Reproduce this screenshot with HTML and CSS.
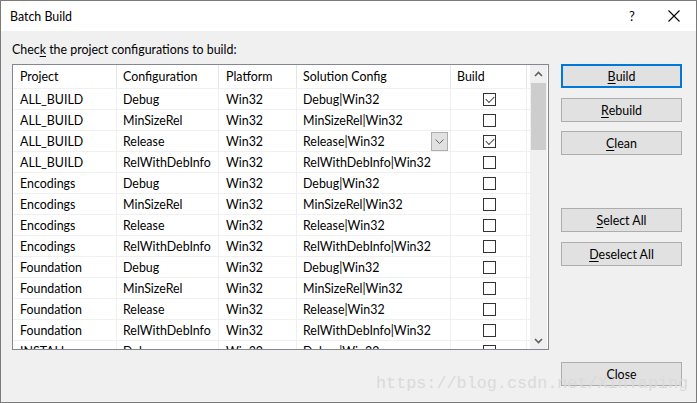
FILE: index.html
```html
<!DOCTYPE html>
<html>
<head>
<meta charset="utf-8">
<link rel="stylesheet" href="styles.css">
</head>
<body>
<div class="window">
  <div class="titlebar">
    <span class="title">Batch Build</span>
    <span class="help">?</span>
    <span class="close">
      <svg width="12" height="12" viewBox="0 0 12 12"><path d="M0.5 0.5 L11.5 11.5 M11.5 0.5 L0.5 11.5" stroke="#000" stroke-width="1.1" fill="none"/></svg>
    </span>
  </div>
  <div class="content">
    <div class="left">
      <div class="label">Chec<u>k</u> the project configurations to build:</div>
      <div class="grid">
        <div class="table">
          <div class="row head">
            <div class="c c1">Project</div>
            <div class="c c2">Configuration</div>
            <div class="c c3">Platform</div>
            <div class="c c4">Solution Config</div>
            <div class="c c5">Build</div>
            <div class="c fill"></div>
          </div>
          <div class="row"><div class="c c1">ALL_BUILD</div><div class="c c2">Debug</div><div class="c c3">Win32</div><div class="c c4">Debug|Win32</div><div class="c c5"><span class="cb on"></span></div><div class="c fill"></div></div>
          <div class="row"><div class="c c1">ALL_BUILD</div><div class="c c2">MinSizeRel</div><div class="c c3">Win32</div><div class="c c4">MinSizeRel|Win32</div><div class="c c5"><span class="cb"></span></div><div class="c fill"></div></div>
          <div class="row"><div class="c c1">ALL_BUILD</div><div class="c c2">Release</div><div class="c c3">Win32</div><div class="c c4 combo">Release|Win32<span class="drop"><svg width="9" height="5" viewBox="0 0 9 5"><path d="M0.5 0.5 L4.5 4.5 L8.5 0.5" stroke="#606060" stroke-width="1" fill="none"/></svg></span></div><div class="c c5"><span class="cb on"></span></div><div class="c fill"></div></div>
          <div class="row"><div class="c c1">ALL_BUILD</div><div class="c c2">RelWithDebInfo</div><div class="c c3">Win32</div><div class="c c4">RelWithDebInfo|Win32</div><div class="c c5"><span class="cb"></span></div><div class="c fill"></div></div>
          <div class="row"><div class="c c1">Encodings</div><div class="c c2">Debug</div><div class="c c3">Win32</div><div class="c c4">Debug|Win32</div><div class="c c5"><span class="cb"></span></div><div class="c fill"></div></div>
          <div class="row"><div class="c c1">Encodings</div><div class="c c2">MinSizeRel</div><div class="c c3">Win32</div><div class="c c4">MinSizeRel|Win32</div><div class="c c5"><span class="cb"></span></div><div class="c fill"></div></div>
          <div class="row"><div class="c c1">Encodings</div><div class="c c2">Release</div><div class="c c3">Win32</div><div class="c c4">Release|Win32</div><div class="c c5"><span class="cb"></span></div><div class="c fill"></div></div>
          <div class="row"><div class="c c1">Encodings</div><div class="c c2">RelWithDebInfo</div><div class="c c3">Win32</div><div class="c c4">RelWithDebInfo|Win32</div><div class="c c5"><span class="cb"></span></div><div class="c fill"></div></div>
          <div class="row"><div class="c c1">Foundation</div><div class="c c2">Debug</div><div class="c c3">Win32</div><div class="c c4">Debug|Win32</div><div class="c c5"><span class="cb"></span></div><div class="c fill"></div></div>
          <div class="row"><div class="c c1">Foundation</div><div class="c c2">MinSizeRel</div><div class="c c3">Win32</div><div class="c c4">MinSizeRel|Win32</div><div class="c c5"><span class="cb"></span></div><div class="c fill"></div></div>
          <div class="row"><div class="c c1">Foundation</div><div class="c c2">Release</div><div class="c c3">Win32</div><div class="c c4">Release|Win32</div><div class="c c5"><span class="cb"></span></div><div class="c fill"></div></div>
          <div class="row"><div class="c c1">Foundation</div><div class="c c2">RelWithDebInfo</div><div class="c c3">Win32</div><div class="c c4">RelWithDebInfo|Win32</div><div class="c c5"><span class="cb"></span></div><div class="c fill"></div></div>
          <div class="row"><div class="c c1">INSTALL</div><div class="c c2">Debug</div><div class="c c3">Win32</div><div class="c c4">Debug|Win32</div><div class="c c5"><span class="cb"></span></div><div class="c fill"></div></div>
        </div>
        <div class="scrollbar">
          <div class="arrow"><svg width="9" height="6" viewBox="0 0 9 6"><path d="M1 5 L4.5 1.5 L8 5" stroke="#606060" stroke-width="1.6" fill="none"/></svg></div>
          <div class="track"><div class="thumb"></div></div>
          <div class="arrow"><svg width="9" height="6" viewBox="0 0 9 6"><path d="M1 1 L4.5 4.5 L8 1" stroke="#606060" stroke-width="1.6" fill="none"/></svg></div>
        </div>
      </div>
    </div>
    <div class="buttons">
      <div class="btn default"><u>B</u>uild</div>
      <div class="btn"><u>R</u>ebuild</div>
      <div class="btn"><u>C</u>lean</div>
      <div class="btn gap1"><u>S</u>elect All</div>
      <div class="btn"><u>D</u>eselect All</div>
      <div class="btn last">Close</div>
    </div>
  </div>
  <div class="watermark">https://blog.csdn.net/XinYaping</div>
</div>
</body>
</html>
```

FILE: styles.css
```css
* { box-sizing: border-box; }
html, body { margin: 0; padding: 0; }
body {
  width: 697px;
  height: 403px;
  overflow: hidden;
  font-family: "Lato", "Noto Sans", sans-serif;
  font-size: 12.4px;
  color: #000;
}
.window {
  position: relative;
  width: 697px;
  height: 403px;
  border: 1px solid #7a7a7a;
  background: #f0f0f0;
  display: flex;
  flex-direction: column;
}
.titlebar {
  height: 30px;
  background: #fff;
  display: flex;
  align-items: center;
  padding-left: 9px;
}
.title { flex: 1; }
.help { width: 20px; margin-right: 26px; text-align: center; font-size: 13px; }
.close { width: 12px; height: 12px; margin-right: 16px; display: flex; }
.content {
  flex: 1;
  display: flex;
  padding-left: 11px;
}
.left { display: flex; flex-direction: column; }
.label {
  height: 33px;
  padding-top: 12px;
  line-height: 14px;
}
.grid {
  width: 537px;
  height: 286px;
  border: 1px solid #828790;
  background: #fff;
  display: flex;
  overflow: hidden;
}
.table { width: 517px; display: flex; flex-direction: column; }
.row {
  display: flex;
  height: 21px;
  flex: none;
  border-bottom: 1px solid #f0f0f0;
}
.row.head { height: 24px; border-bottom: 1px solid #f0f0f0; }
.c {
  flex: none;
  padding-left: 6px;
  display: flex;
  align-items: center;
  border-right: 1px solid #f0f0f0;
  white-space: nowrap;
  position: relative;
}
.head .c { border-right: 1px solid #e5e5e5; }
.c1 { width: 104px; padding-left: 7px; }
.c2 { width: 102px; }
.c3 { width: 78px; padding-left: 7px; }
.c4 { width: 154px; }
.c5 { width: 76px; justify-content: center; padding-left: 0; }
.head .c5 { justify-content: flex-start; padding-left: 6px; }
.fill { width: 3px; border-right: none !important; padding: 0; }
.cb {
  width: 13px;
  height: 13px;
  border: 1px solid #333;
  background: #fff;
  margin-left: 1px;
  position: relative;
}
.cb.on::after {
  content: "";
  position: absolute;
  left: 2px;
  top: 1px;
  width: 7px;
  height: 4px;
  border-left: 1px solid #444;
  border-bottom: 1px solid #444;
  transform: translate(0, 1px) rotate(-45deg);
  transform-origin: center;
}
.drop {
  position: absolute;
  right: 2px;
  top: 1px;
  width: 17px;
  height: 19px;
  background: #e1e1e1;
  border: 1px solid #adadad;
  display: flex;
  align-items: center;
  justify-content: center;
}
.scrollbar {
  width: 17px;
  background: #f0f0f0;
  display: flex;
  flex-direction: column;
}
.arrow {
  height: 17px;
  display: flex;
  align-items: center;
  justify-content: center;
}
.track { flex: 1; padding: 1px 1px; }
.thumb { height: 67px; background: #cdcdcd; }
.buttons {
  display: flex;
  flex-direction: column;
  margin-left: 12px;
  padding-top: 33px;
}
.btn {
  width: 121px;
  height: 24px;
  background: #e1e1e1;
  border: 1px solid #adadad;
  display: flex;
  align-items: center;
  justify-content: center;
  margin-bottom: 10px;
}
.btn.default { border: 2px solid #0078d7; }
.btn:nth-child(2) { margin-bottom: 9px; }
.btn.gap1 { margin-top: 43px; }
.btn.last { margin-top: 86px; }
u { text-decoration-thickness: 1px; text-underline-offset: 2px; }
.watermark {
  position: absolute;
  left: 375px;
  top: 373px;
  font-family: "Liberation Mono", monospace;
  font-size: 16.8px;
  color: #dadada;
  white-space: nowrap;
  pointer-events: none;
}
```
